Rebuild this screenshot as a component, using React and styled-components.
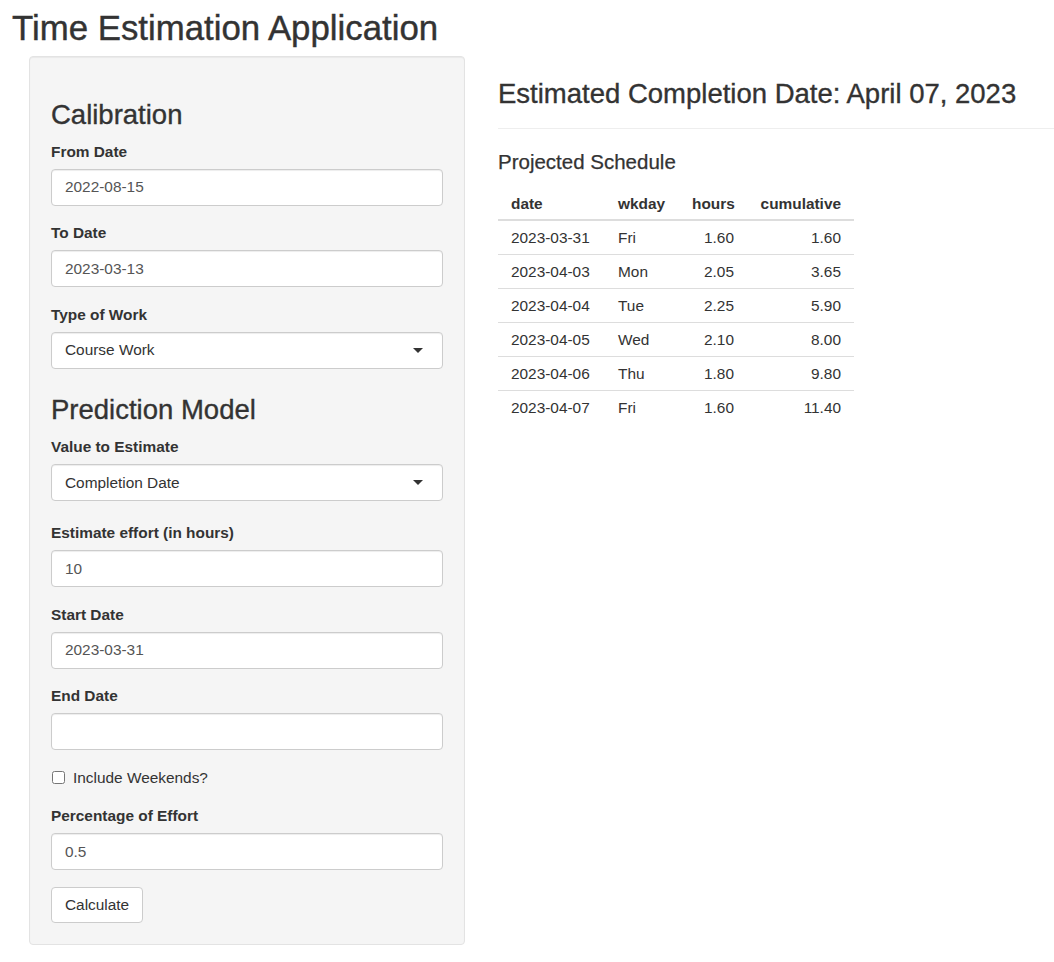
import styled, { createGlobalStyle } from "styled-components";

const GlobalStyle = createGlobalStyle`
  * {
    box-sizing: border-box;
  }
  body {
    margin: 0;
    background: #fff;
    color: #333;
    font-family: "Liberation Sans", Arial, sans-serif;
    font-size: 15.4px;
    line-height: 1.42857;
  }
`;

const schedule = [
  { date: "2023-03-31", wkday: "Fri", hours: "1.60", cumulative: "1.60" },
  { date: "2023-04-03", wkday: "Mon", hours: "2.05", cumulative: "3.65" },
  { date: "2023-04-04", wkday: "Tue", hours: "2.25", cumulative: "5.90" },
  { date: "2023-04-05", wkday: "Wed", hours: "2.10", cumulative: "8.00" },
  { date: "2023-04-06", wkday: "Thu", hours: "1.80", cumulative: "9.80" },
  { date: "2023-04-07", wkday: "Fri", hours: "1.60", cumulative: "11.40" },
];

const columns = [
  { key: "date", label: "date", width: 107, align: "left" },
  { key: "wkday", label: "wkday", width: 74, align: "left" },
  { key: "hours", label: "hours", width: 68, align: "right" },
  { key: "cumulative", label: "cumulative", width: 107, align: "right" },
];

const App = () => {
  return (
    <Page>
      <GlobalStyle />
      <AppTitle>Time Estimation Application</AppTitle>
      <Layout>
        <Well>
          <SectionTitle $first>Calibration</SectionTitle>
          <FormGroup>
            <Label>From Date</Label>
            <TextInput readOnly value="2022-08-15" />
          </FormGroup>
          <FormGroup>
            <Label>To Date</Label>
            <TextInput readOnly value="2023-03-13" />
          </FormGroup>
          <FormGroup $select>
            <Label>Type of Work</Label>
            <SelectBox>
              Course Work
              <Caret />
            </SelectBox>
          </FormGroup>

          <SectionTitle>Prediction Model</SectionTitle>
          <FormGroup $select>
            <Label>Value to Estimate</Label>
            <SelectBox>
              Completion Date
              <Caret />
            </SelectBox>
          </FormGroup>
          <FormGroup>
            <Label>Estimate effort (in hours)</Label>
            <TextInput readOnly value="10" />
          </FormGroup>
          <FormGroup>
            <Label>Start Date</Label>
            <TextInput readOnly value="2023-03-31" />
          </FormGroup>
          <FormGroup>
            <Label>End Date</Label>
            <TextInput readOnly value="" />
          </FormGroup>
          <CheckRow>
            <CheckBox type="checkbox" />
            Include Weekends?
          </CheckRow>
          <FormGroup>
            <Label>Percentage of Effort</Label>
            <TextInput readOnly value="0.5" />
          </FormGroup>
          <div>
            <Button type="button">Calculate</Button>
          </div>
        </Well>

        <Results>
          <ResultTitle>Estimated Completion Date: April 07, 2023</ResultTitle>
          <Divider />
          <SubTitle>Projected Schedule</SubTitle>
          <Table>
            <colgroup>
              {columns.map((c) => (
                <col key={c.key} style={{ width: c.width }} />
              ))}
            </colgroup>
            <thead>
              <tr>
                {columns.map((c) => (
                  <Th key={c.key} $align={c.align}>
                    {c.label}
                  </Th>
                ))}
              </tr>
            </thead>
            <tbody>
              {schedule.map((row, i) => (
                <tr key={row.date}>
                  {columns.map((c) => (
                    <Td key={c.key} $align={c.align} $first={i === 0}>
                      {row[c.key]}
                    </Td>
                  ))}
                </tr>
              ))}
            </tbody>
          </Table>
        </Results>
      </Layout>
    </Page>
  );
};

const Page = styled.div`
  padding-bottom: 16px;
`;

const AppTitle = styled.h2`
  margin: 9px 0 0;
  padding-left: 12px;
  font-size: 34.8px;
  font-weight: 400;
  line-height: 1.1;
  color: #333;
  -webkit-text-stroke: 0.4px #333;
`;

const Layout = styled.div`
  display: grid;
  grid-template-columns: 436px 1fr;
  column-gap: 33px;
  align-items: start;
  padding-left: 29px;
  margin-top: 8.3px;
`;

const Well = styled.div`
  display: flex;
  flex-direction: column;
  padding: 21px;
  background: #f5f5f5;
  border: 1px solid #e3e3e3;
  border-radius: 4px;
  box-shadow: inset 0 1px 1px rgba(0, 0, 0, 0.05);
`;

const SectionTitle = styled.h3`
  margin: ${({ $first }) => ($first ? "22px" : "5px")} 0 11px;
  font-size: 27.5px;
  font-weight: 400;
  line-height: 1.1;
  -webkit-text-stroke: 0.35px #333;
`;

const FormGroup = styled.div`
  display: flex;
  flex-direction: column;
  margin-bottom: ${({ $select }) => ($select ? "21px" : "16.5px")};
`;

const Label = styled.label`
  margin-bottom: 6px;
  font-weight: 700;
  line-height: 22px;
`;

const TextInput = styled.input`
  width: 100%;
  height: 37px;
  padding: 0 13px;
  background: #fff;
  border: 1px solid #ccc;
  border-radius: 4px;
  box-shadow: inset 0 1px 1px rgba(0, 0, 0, 0.075);
  color: #555;
  font-family: inherit;
  font-size: 15.4px;
  outline: none;
`;

const SelectBox = styled.div`
  display: flex;
  align-items: center;
  justify-content: space-between;
  height: 37px;
  padding: 0 19px 0 13px;
  background: #fff;
  border: 1px solid #ccc;
  border-radius: 4px;
  box-shadow: inset 0 1px 1px rgba(0, 0, 0, 0.075);
  color: #333;
`;

const Caret = styled.span`
  width: 0;
  height: 0;
  border-left: 5.5px solid transparent;
  border-right: 5.5px solid transparent;
  border-top: 5.5px solid #333;
`;

const CheckRow = styled.label`
  display: flex;
  align-items: center;
  gap: 8px;
  margin-bottom: 16.5px;
  line-height: 22px;
`;

const CheckBox = styled.input`
  width: 13px;
  height: 13px;
  margin: 0 0 0 1px;
`;

const Button = styled.button`
  height: 36.5px;
  padding: 0 13px;
  background: #fff;
  border: 1px solid #ccc;
  border-radius: 4px;
  color: #333;
  font-family: inherit;
  font-size: 15.4px;
`;

const Results = styled.div`
  display: flex;
  flex-direction: column;
  min-width: 0;
`;

const ResultTitle = styled.h3`
  margin: 23px 0 0;
  font-size: 27.5px;
  font-weight: 400;
  line-height: 1.1;
  -webkit-text-stroke: 0.35px #333;
`;

const Divider = styled.hr`
  width: 100%;
  margin: 19px 0 22px;
  border: 0;
  border-top: 1px solid #eee;
`;

const SubTitle = styled.h4`
  margin: 0 0 11px;
  font-size: 20.5px;
  font-weight: 400;
  line-height: 1.1;
  -webkit-text-stroke: 0.25px #333;
`;

const Table = styled.table`
  width: 356px;
  table-layout: fixed;
  border-collapse: collapse;
`;

const Th = styled.th`
  padding: 9px 13px 4px;
  border-bottom: 2px solid #ddd;
  font-weight: 700;
  line-height: 22px;
  text-align: ${({ $align }) => $align};
`;

const Td = styled.td`
  padding: 6px 13px 5px;
  border-top: ${({ $first }) => ($first ? "0" : "1px solid #ddd")};
  line-height: 22px;
  text-align: ${({ $align }) => $align};
`;

export default App;
